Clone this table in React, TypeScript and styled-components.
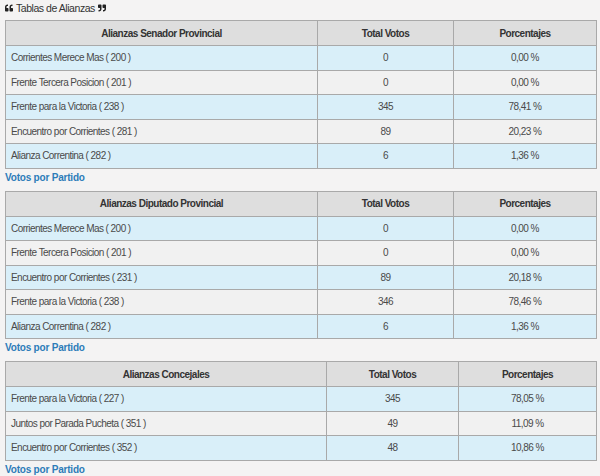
import React from "react";
import styled, { createGlobalStyle } from "styled-components";
import { FaQuoteLeft, FaQuoteRight } from "react-icons/fa";

const Global = createGlobalStyle`
  html, body { margin: 0; padding: 0; background: #f4f3f3; }
  body { font-family: "Liberation Sans", Arial, sans-serif; color: #444; }
`;

const Page = styled.div`
  padding: 1px 4px 0 5px;
  width: 591px;
`;

const Title = styled.div`
  display: flex;
  align-items: center;
  gap: 3px;
  height: 13px;
  font-size: 10.5px;
  letter-spacing: -0.45px;
  color: #333;
  margin-bottom: 6px;
  svg { width: 8px; height: 8px; color: #222; }
`;

const Section = styled.div`
  margin-bottom: 6px;
`;

const Table = styled.table`
  width: 591px;
  border-collapse: collapse;
  table-layout: fixed;
  font-size: 10px;
  letter-spacing: -0.55px;
`;

const Col = styled.col<{ $w: number }>`
  width: ${(p) => p.$w}px;
`;

const Th = styled.th`
  background: #dedede;
  border: 1px solid #a9a9a9;
  height: 24px;
  padding: 0;
  font-weight: bold;
  letter-spacing: -0.5px;
  color: #333;
  text-align: center;
`;

const Tr = styled.tr<{ $alt: boolean }>`
  background: ${(p) => (p.$alt ? "#f1f1f1" : "#d9eff9")};
`;

const Td = styled.td<{ $center?: boolean }>`
  border: 1px solid #a9a9a9;
  height: 23.5px;
  padding: 0 5px;
  text-align: ${(p) => (p.$center ? "center" : "left")};
  color: #4a4a4a;
`;

const Link = styled.a`
  display: block;
  margin-top: 2px;
  height: 14px;
  line-height: 14px;
  font-size: 10px;
  letter-spacing: -0.2px;
  font-weight: bold;
  color: #2c7cb9;
  text-decoration: none;
`;

type Row = [string, string, string];

const tables: { title: string; widths: [number, number, number]; rows: Row[] }[] = [
  {
    title: "Alianzas Senador Provincial",
    widths: [312, 136, 143],
    rows: [
      ["Corrientes Merece Mas ( 200 )", "0", "0,00 %"],
      ["Frente Tercera Posicion ( 201 )", "0", "0,00 %"],
      ["Frente para la Victoria ( 238 )", "345", "78,41 %"],
      ["Encuentro por Corrientes ( 281 )", "89", "20,23 %"],
      ["Alianza Correntina ( 282 )", "6", "1,36 %"],
    ],
  },
  {
    title: "Alianzas Diputado Provincial",
    widths: [312, 136, 143],
    rows: [
      ["Corrientes Merece Mas ( 200 )", "0", "0,00 %"],
      ["Frente Tercera Posicion ( 201 )", "0", "0,00 %"],
      ["Encuentro por Corrientes ( 231 )", "89", "20,18 %"],
      ["Frente para la Victoria ( 238 )", "346", "78,46 %"],
      ["Alianza Correntina ( 282 )", "6", "1,36 %"],
    ],
  },
  {
    title: "Alianzas Concejales",
    widths: [321, 132, 138],
    rows: [
      ["Frente para la Victoria ( 227 )", "345", "78,05 %"],
      ["Juntos por Parada Pucheta ( 351 )", "49", "11,09 %"],
      ["Encuentro por Corrientes ( 352 )", "48", "10,86 %"],
    ],
  },
];

export default function App() {
  return (
    <Page>
      <Global />
      <Title>
        <FaQuoteLeft />
        <span>Tablas de Alianzas</span>
        <FaQuoteRight />
      </Title>
      {tables.map((t) => (
        <Section key={t.title}>
          <Table>
            <colgroup>
              {t.widths.map((w, i) => (
                <Col key={i} $w={w} />
              ))}
            </colgroup>
            <thead>
              <tr>
                <Th>{t.title}</Th>
                <Th>Total Votos</Th>
                <Th>Porcentajes</Th>
              </tr>
            </thead>
            <tbody>
              {t.rows.map((r, i) => (
                <Tr key={i} $alt={i % 2 === 1}>
                  <Td>{r[0]}</Td>
                  <Td $center>{r[1]}</Td>
                  <Td $center>{r[2]}</Td>
                </Tr>
              ))}
            </tbody>
          </Table>
          <Link href="#">Votos por Partido</Link>
        </Section>
      ))}
    </Page>
  );
}
